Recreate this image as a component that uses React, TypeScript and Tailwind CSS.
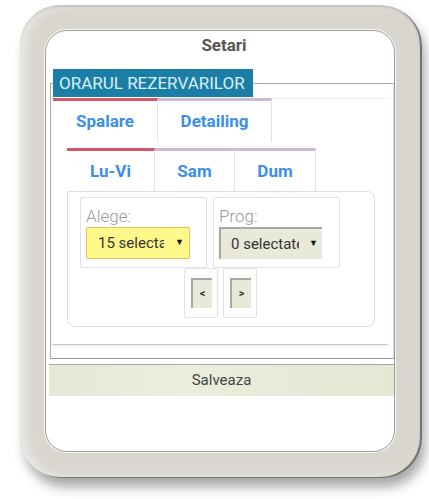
import React from "react";

const font = { fontFamily: "Roboto, 'Noto Sans', sans-serif" };

function Tab({ label, active, w }: { label: string; active?: boolean; w: string }) {
  return (
    <div
      className={`${w} h-[44px] flex items-center justify-center border-t-[3px] border-r border-r-[#e2e2e2] text-[17px] font-bold text-[#3b8eea] ${
        active ? "border-t-[#d4546e]" : "border-t-[#cbb9da]"
      }`}
    >
      {label}
    </div>
  );
}

export default function App() {
  return (
    <div className="w-[429px] h-[499px] bg-white overflow-hidden pt-[5px] pl-[20px]" style={font}>
      <div className="w-[400px] h-[472px] rounded-[40px] bg-[#d9d6cf] p-[25px] shadow-[2px_1px_0_#74746f,5px_10px_12px_rgba(0,0,0,0.35),inset_6px_0_10px_rgba(255,255,255,0.5),inset_0_2px_2px_rgba(120,120,110,0.35)]">
        <div className="w-[350px] h-[422px] rounded-[22px] bg-white border border-[#9b9b98] shadow-[0_0_0_1px_#f7f7f2] overflow-hidden">
          {/* title */}
          <div className="h-[28px] pt-[2px] flex items-center justify-center pl-[8px] text-[17px] font-bold text-[#555555]">
            Setari
          </div>
          {/* fieldset */}
          <fieldset className="mt-[10px] ml-[4px] w-[344px] h-[290px] border border-[#a9a9a9] border-r-[#dcdcdc] border-b-[#9a9a9a] px-[1px]">
            <legend className="ml-[1px] h-[28px] w-[200px] bg-[#1b7ea6] text-[#dcf0f6] text-[17px] flex items-center pl-[6px] leading-none whitespace-nowrap">
              ORARUL REZERVARILOR
            </legend>
            <div className="mr-[4px] mt-[1px] h-[247px] border-t border-t-[#eeeeee] border-b border-b-[#c9c9c9] shadow-[0_2px_2px_rgba(0,0,0,0.06)]">
              <div className="flex -mt-[1px] ml-[1px]">
                <Tab label="Spalare" active w="w-[105px]" />
                <Tab label="Detailing" w="w-[114px]" />
              </div>
              <div className="pl-[15px] pt-[6px]">
                <div className="flex">
                  <Tab label="Lu-Vi" active w="w-[88px]" />
                  <Tab label="Sam" w="w-[80px]" />
                  <Tab label="Dum" w="w-[81px]" />
                </div>
                <div className="w-[308px] h-[136px] -mt-[1px] rounded-b-[8px] rounded-tr-[8px] border border-[#dddddd] pl-[12px] pt-[5px]">
                  <div className="flex gap-[6px]">
                    <div className="w-[127px] h-[71px] border border-[#dde3ea] rounded-[2px] pl-[5px]">
                      <div className="h-[29px] flex items-end pb-[2px] text-[17px] font-light text-[#9a9a9a] leading-none">
                        Alege:
                      </div>
                      <div className="w-[104px] h-[32px] bg-[#fff98c] border border-[#e3c35a] rounded-[2px] flex items-center pl-[11px]">
                        <span className="w-[66px] h-[20px] overflow-hidden whitespace-nowrap text-[15px] leading-[20px] text-[#333333]">
                          15 selecta
                        </span>
                        <span className="ml-[11px] text-[9px] text-[#111111]">▼</span>
                      </div>
                    </div>
                    <div className="w-[127px] h-[71px] border border-[#dde3ea] rounded-[2px] pl-[5px]">
                      <div className="h-[29px] flex items-end pb-[2px] text-[17px] font-light text-[#9a9a9a] leading-none">
                        Prog:
                      </div>
                      <div className="w-[103px] h-[32px] bg-[#e9e9da] border-l-2 border-t-2 border-l-[#a8a8a0] border-t-[#a8a8a0] flex items-center pl-[10px]">
                        <span className="w-[68px] h-[20px] overflow-hidden whitespace-nowrap text-[15px] leading-[20px] text-[#333333]">
                          0 selectate
                        </span>
                        <span className="ml-[10px] text-[9px] text-[#111111]">▼</span>
                      </div>
                    </div>
                  </div>
                  <div className="flex gap-[5px] ml-[104px]">
                    <div className="w-[34px] h-[50px] border border-[#dde3ea] rounded-[2px] pl-[6px] pt-[9px]">
                      <div className="w-[21px] h-[30px] bg-[#e9e9da] border-l-2 border-t-2 border-l-[#a8a8a0] border-t-[#a8a8a0] flex items-center justify-center text-[11px] font-bold text-[#333333]">
                        &lt;
                      </div>
                    </div>
                    <div className="w-[34px] h-[50px] border border-[#dde3ea] rounded-[2px] pl-[6px] pt-[9px]">
                      <div className="w-[21px] h-[30px] bg-[#e9e9da] border-l-2 border-t-2 border-l-[#a8a8a0] border-t-[#a8a8a0] flex items-center justify-center text-[11px] font-bold text-[#333333]">
                        &gt;
                      </div>
                    </div>
                  </div>
                </div>
              </div>
            </div>
          </fieldset>
          {/* save bar */}
          <div className="ml-[3px] mt-[5px] w-[345px] h-[32px] border-t border-t-[#a5a5a5] bg-[linear-gradient(90deg,#e7e8d6,#ecedde_40%,#e6e6d4)] flex items-center justify-center text-[15px] text-[#444444]">
            Salveaza
          </div>
        </div>
      </div>
    </div>
  );
}
